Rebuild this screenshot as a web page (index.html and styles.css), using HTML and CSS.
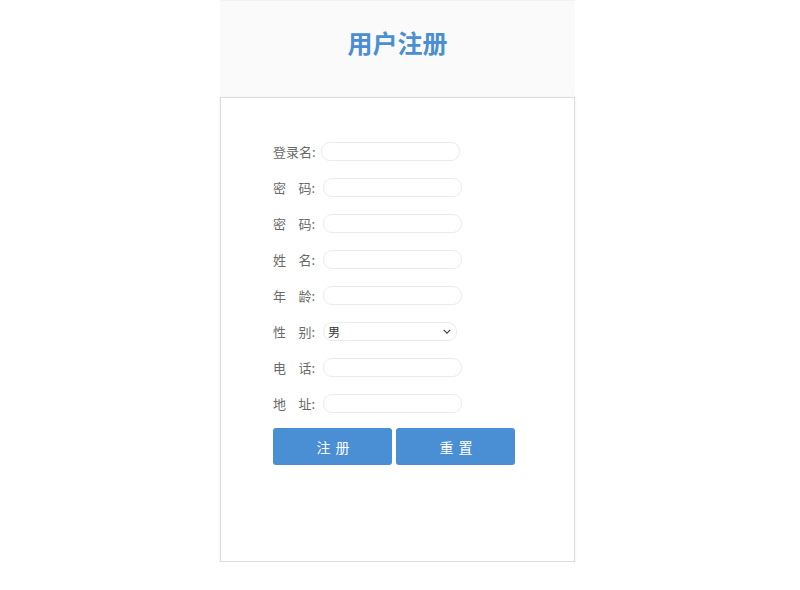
FILE: index.html
```html
<!DOCTYPE html>
<html lang="zh">
<head>
  <meta charset="UTF-8">
  <meta name="viewport" content="width=device-width, initial-scale=1.0">
  <title>用户注册</title>
  <link rel="stylesheet" href="styles.css">
</head>
<body>
  <div class="wrap">
    <div class="header">
      <h1>用户注册</h1>
    </div>

    <div class="card">
      <form class="reg-form">
        <div class="row">
          <label class="lbl lbl-3">登录名:</label>
          <input type="text" class="txt">
        </div>
        <div class="row">
          <label class="lbl"><span>密</span><span>码:</span></label>
          <input type="password" class="txt">
        </div>
        <div class="row">
          <label class="lbl"><span>密</span><span>码:</span></label>
          <input type="password" class="txt">
        </div>
        <div class="row">
          <label class="lbl"><span>姓</span><span>名:</span></label>
          <input type="text" class="txt">
        </div>
        <div class="row">
          <label class="lbl"><span>年</span><span>龄:</span></label>
          <input type="text" class="txt">
        </div>
        <div class="row">
          <label class="lbl"><span>性</span><span>别:</span></label>
          <span class="sel-box">
            <select class="sel">
              <option>男</option>
              <option>女</option>
            </select>
            <!-- 下拉箭头 -->
            <svg class="sel-arrow" viewBox="0 0 10 6" xmlns="http://www.w3.org/2000/svg">
              <polyline points="1,1 5,5 9,1" />
            </svg>
          </span>
        </div>
        <div class="row">
          <label class="lbl"><span>电</span><span>话:</span></label>
          <input type="text" class="txt">
        </div>
        <div class="row">
          <label class="lbl"><span>地</span><span>址:</span></label>
          <input type="text" class="txt">
        </div>

        <div class="btns">
          <button type="submit" class="btn">注册</button>
          <button type="reset" class="btn">重置</button>
        </div>
      </form>
    </div>
  </div>
</body>
</html>
```

FILE: styles.css
```css
body {
  margin: 0;
  padding-right: 5px;
  font-family: "Noto Sans CJK SC", "Noto Sans", sans-serif;
  background-color: #fff;
}
.wrap {
  width: 355px;
  margin: 0 auto;
}
.header {
  height: 97px;
  background-color: #fafafa;
  border-top: 1px solid #f2f2f2;
  box-sizing: border-box;
  display: flex;
  align-items: center;
  justify-content: center;
}
.header h1 {
  margin: 0 0 14px 0;
  font-size: 25px;
  font-weight: bold;
  color: #4a8fd2;
  line-height: 1;
}
.card {
  height: 465px;
  box-sizing: border-box;
  border: 1px solid #dcdcdc;
  box-shadow: 0 1px 3px rgba(0,0,0,0.08);
  background-color: #fff;
  padding: 35px 0 0 52px;
}
.reg-form {
  display: flex;
  flex-direction: column;
}
.row {
  display: flex;
  align-items: center;
  height: 36px;
  font-size: 13px;
  color: #6a6a6a;
}
.lbl {
  display: flex;
  justify-content: space-between;
  width: 42px;
  margin-right: 8px;
}
.lbl-3 {
  width: 45px;
  margin-right: 3px;
}
.txt {
  width: 139px;
  height: 19px;
  box-sizing: border-box;
  border: 1px solid #ebebeb;
  border-radius: 9px;
  padding: 0 6px;
  outline: none;
  background-color: #fff;
}
.sel-box {
  position: relative;
  display: inline-flex;
}
.sel {
  appearance: none;
  -webkit-appearance: none;
  width: 134px;
  height: 19px;
  box-sizing: border-box;
  border: 1px solid #ebebeb;
  border-radius: 9px;
  padding: 0 4px;
  font-family: "Noto Sans CJK SC", sans-serif;
  font-size: 12px;
  color: #333;
  background-color: #fff;
  outline: none;
}
.sel-arrow {
  position: absolute;
  right: 6px;
  top: 7px;
  width: 8px;
  height: 5px;
  fill: none;
  stroke: #444;
  stroke-width: 1.6;
  pointer-events: none;
}
.btns {
  display: flex;
  gap: 4px;
  margin-top: 7px;
}
.btn {
  width: 119px;
  height: 37px;
  border: none;
  border-radius: 3px;
  background-color: #4a8fd3;
  color: #fff;
  font-family: "Noto Sans CJK SC", sans-serif;
  font-size: 14px;
  letter-spacing: 5px;
  padding-left: 12px;
  cursor: pointer;
}
```
